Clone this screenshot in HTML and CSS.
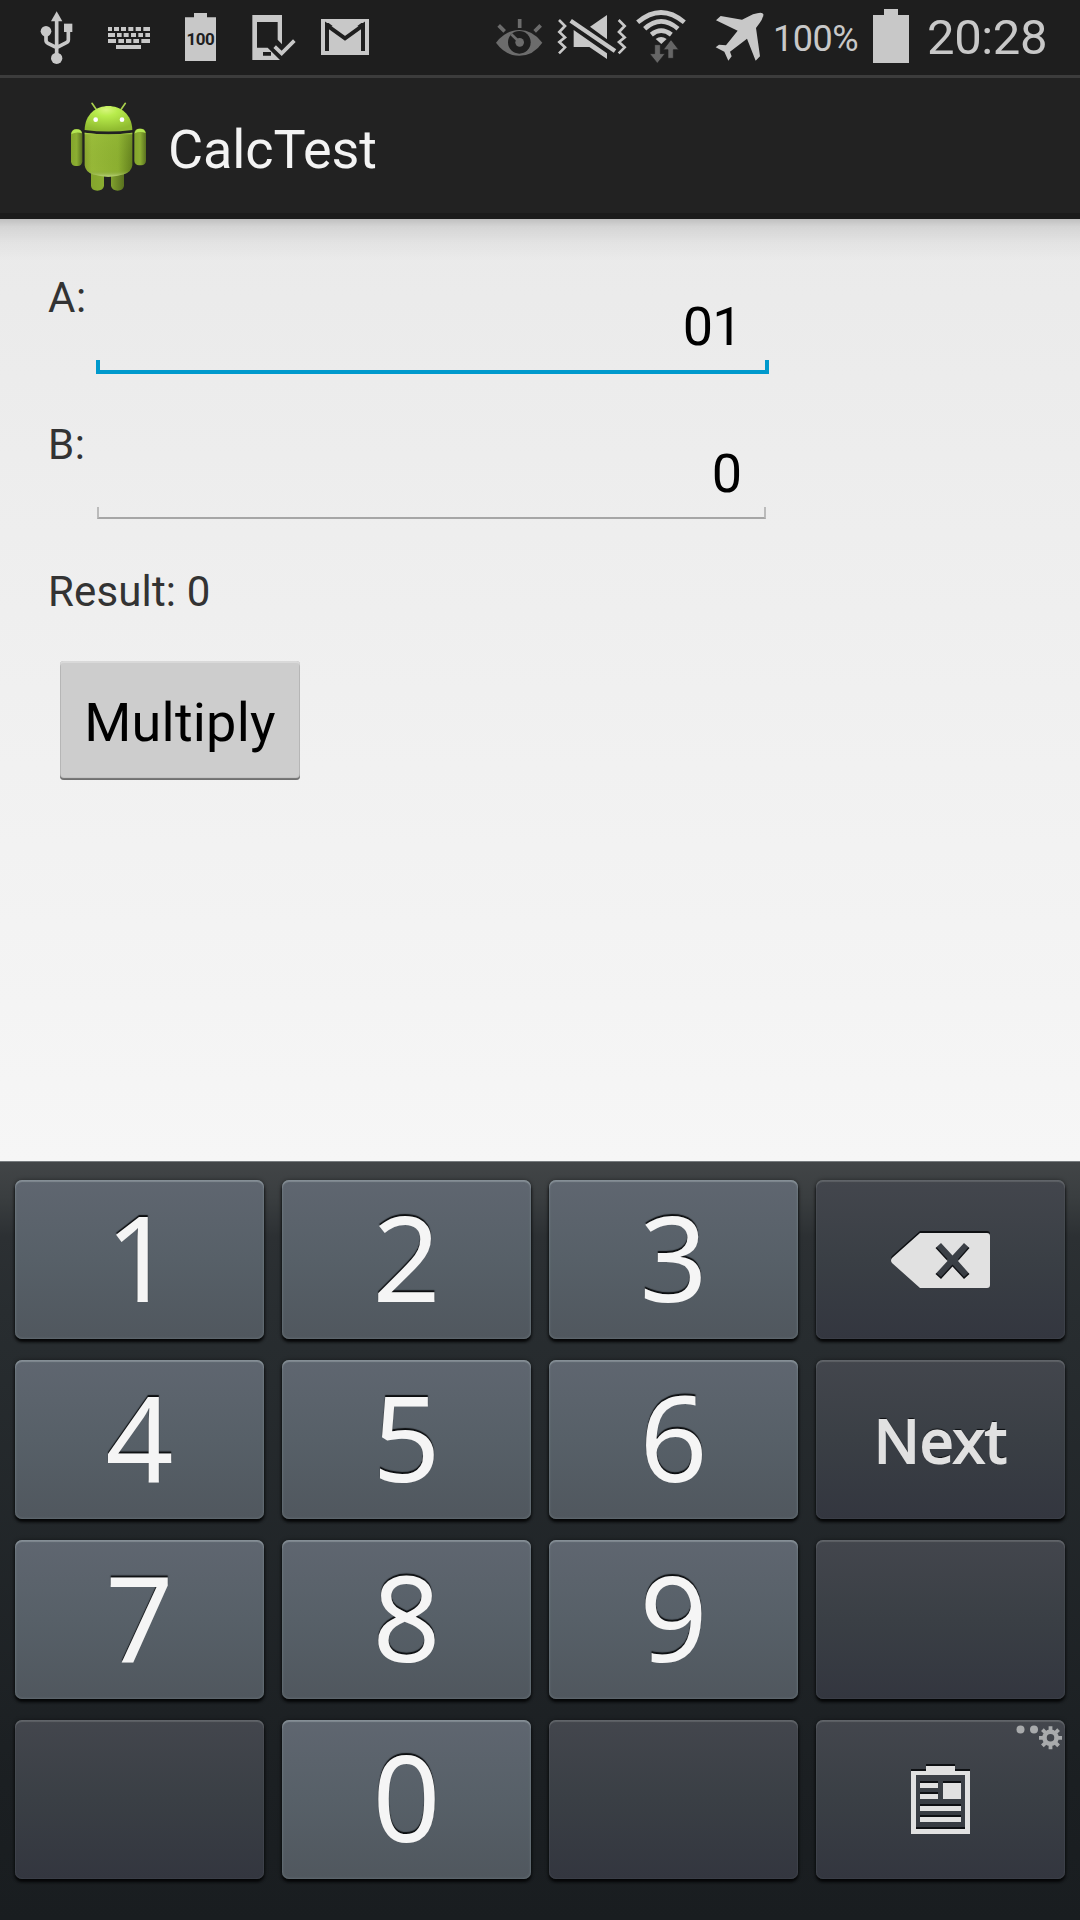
FILE: index.html
```html
<!DOCTYPE html>
<html lang="en">
<head>
<meta charset="utf-8">
<title>CalcTest</title>
<link rel="stylesheet" href="styles.css">
</head>
<body>
<header class="status">
  <svg class="ic usb" viewBox="120 0 99 225" width="33" height="75"><g fill="none" stroke="#c8c8c8" stroke-width="11"><path d="M170 60V165M138 95V121Q138 127 144 130L170 143M205 92V119Q205 125 199 128L170 143"/></g><g fill="#c8c8c8"><path d="M170 34L187 64H153Z"/><circle cx="138" cy="94" r="16"/><rect x="192" y="71" width="25" height="25"/><circle cx="170" cy="175" r="17"/></g></svg>
  <svg class="ic keys" viewBox="324 0 126 225" width="42" height="75"><g fill="none" stroke="#c8c8c8" stroke-width="12"><path d="M324 87H336M342 87H357M363 87H378M385 87H400M407 87H423M430 87H450M324 105H345M351 105H365M371 105H386M393 105H408M415 105H429M436 105H450M324 123H348M355 123H372M378 123H394M400 123H417M424 123H450M348 141H423"/></g></svg>
  <div class="battery-note"><svg viewBox="555 0 93 225" width="31" height="75"><path fill="#c8c8c8" d="M555 52H582V39H621V52H648V183H555Z"/></svg><span>100</span></div>
  <svg class="ic device" viewBox="756 0 132 225" width="44" height="75"><path fill="#c8c8c8" fill-rule="evenodd" d="M757 45H846V133L833 119V66H771V143H803L840 180H757ZM789 156V167H813V156Z"/><path d="M824 140L845 160L883 122" fill="none" stroke="#c8c8c8" stroke-width="11"/></svg>
  <svg class="ic gmail" viewBox="963 0 144 225" width="48" height="75"><path fill="#c8c8c8" d="M963 57H1107V165H963Z"/><path d="M981 153V76L1035 115L1089 76V153" fill="none" stroke="#1e1e1e" stroke-width="12"/><path d="M975 69H986L998 78L981 84Z M1095 69H1084L1072 78L1089 84Z" fill="#1e1e1e"/></svg>
  <svg class="ic eye" viewBox="48 0 141 225" width="47" height="75"><g fill="none" stroke="#6c6c6c" stroke-width="11"><path d="M56 76L74 94M119 57V84M182 76L164 94"/></g><path fill="#6c6c6c" d="M48 128Q78 90 118 90T187 128Q160 167 118 167T48 128Z"/><circle cx="118" cy="127" r="34" fill="#1e1e1e"/><circle cx="119" cy="127" r="13" fill="#6c6c6c"/><path d="M94 103L118 126" stroke="#6c6c6c" stroke-width="8"/></svg>
  <svg class="ic mute" viewBox="231 0 210 225" width="70" height="75"><g fill="#c8c8c8"><path d="M381 45V118L330 80Z"/><path d="M281 90L381 160V177L328 141H281Z"/></g><g fill="none" stroke="#c8c8c8"><path d="M272 62L405 153" stroke-width="13"/><path d="M237 60L255 78L238 96L255 112L238 126L255 142L237 160M416 60L434 78L417 96L434 112L417 126L434 142L416 160" stroke-width="8"/></g></svg>
  <svg class="ic wifi" viewBox="468 0 150 225" width="50" height="75"><g fill="none" stroke="#c8c8c8" stroke-width="14"><path d="M473 67Q543 8 613 67M494 86Q543 42 594 86M514 104Q543 80 574 104"/></g><path fill="#c8c8c8" d="M527 117Q543 105 560 117L544 132Z"/><path fill="#666" stroke="#1e1e1e" stroke-width="2" d="M524 134H541V161H555L532 190L509 161H524ZM564 175V149H550L573 119L596 149H580V175Z"/></svg>
  <svg class="ic plane" viewBox="705 0 147 225" width="49" height="75"><path fill="#c8c8c8" d="M708 61L722 48L786 59L819 43Q848 34 850 43Q852 54 828 84L840 169L827 182L801 116L750 155L755 169L745 182L733 155L707 142L717 134L738 136L773 92Z"/></svg>
  <span class="percent">100%</span>
  <svg class="ic batt" viewBox="339 0 108 225" width="36" height="75"><path fill="#c8c8c8" d="M339 45H372V27H414V45H447V189H339Z"/></svg>
  <time class="clock">20:28</time>
</header>
<div class="bar">
  <svg class="droid" viewBox="90 93 231 270" width="77" height="90">
    <defs>
      <linearGradient id="body" x1="0" x2="1"><stop offset="0" stop-color="#89a42e"/><stop offset=".15" stop-color="#97b838"/><stop offset=".7" stop-color="#8caf30"/><stop offset="1" stop-color="#63801d"/></linearGradient>
      <linearGradient id="limb" x1="0" x2="1"><stop offset="0" stop-color="#84a52c"/><stop offset=".5" stop-color="#8bae32"/><stop offset="1" stop-color="#59711f"/></linearGradient>
      <radialGradient id="head" cx=".45" cy=".15" r=".8"><stop offset="0" stop-color="#d6f57c"/><stop offset=".3" stop-color="#b8ec4c"/><stop offset="1" stop-color="#90bb30"/></radialGradient>
      <linearGradient id="shine" x1="0" y1="0" x2="0" y2="1"><stop offset="0" stop-color="#bcea58"/><stop offset=".05" stop-color="#a5cf44" stop-opacity=".2"/><stop offset=".85" stop-color="#799c2d" stop-opacity="0"/><stop offset="1" stop-color="#bdd47f"/></linearGradient>
    </defs>
    <g stroke="#a9cf4c" stroke-width="5" stroke-linecap="round"><path d="M156 100L170 120M256 100L242 120"/></g>
    <path fill="url(#limb)" d="M153 310H192V348Q189 362 172 362T153 348ZM213 310H252V348Q249 362 233 362T213 348Z"/>
    <rect x="93" y="178" width="34" height="110" rx="14" fill="url(#limb)"/><rect x="283" y="176" width="35" height="110" rx="14" fill="url(#limb)"/>
    <path d="M94 192Q96 178 110 178T126 190Q110 184 94 192ZM284 190Q286 176 300 176T317 189Q300 182 284 190Z" fill="#b4e653"/>
    <path fill="url(#body)" d="M134 188Q205 197 277 188V286Q275 305 252 313Q205 327 158 313Q136 305 134 286Z"/>
    <path fill="url(#shine)" d="M134 188Q205 197 277 188V286Q275 305 252 313Q205 327 158 313Q136 305 134 286Z"/>
    <path fill="url(#head)" d="M134 180C135 84 275 84 277 180Q205 189 134 180Z"/>
    <circle cx="167" cy="149" r="7" fill="#fff"/><circle cx="246" cy="149" r="7" fill="#fff"/>
  </svg>
  <h1>CalcTest</h1>
</div>
<main class="content">
  <div class="row"><label>A:</label><div class="field active">01</div></div>
  <div class="row"><label>B:</label><div class="field">0</div></div>
  <div class="result">Result: 0</div>
  <button class="multiply">Multiply</button>
</main>
<section class="keyboard">
  <div class="key">1</div><div class="key">2</div><div class="key">3</div>
  <div class="key dark"><svg class="glyph erase" viewBox="0 0 99 55" width="99" height="55"><path fill="#e1e1e1" fill-rule="evenodd" d="M29 0H96Q99 0 99 3V52Q99 55 96 55H29L1 30Q-1 27.500 1 25ZM44.500 15L56.500 28L44.500 41L50 46L61.500 33.500L73 46L78.500 41L67 28L78.500 15L73 10L61.500 22.500L50 10Z"/></svg></div>
  <div class="key">4</div><div class="key">5</div><div class="key">6</div><div class="key dark next">Next</div>
  <div class="key">7</div><div class="key">8</div><div class="key">9</div><div class="key dark"></div>
  <div class="key dark"></div><div class="key">0</div><div class="key dark"></div>
  <div class="key dark">
    <svg class="glyph" viewBox="0 0 59 68" width="59" height="68"><path fill="#e1e1e1" fill-rule="evenodd" d="M0 5H15V0H44V5H59V68H0ZM5 9V63H54V9ZM9 17H27V22H9ZM9 28H27V33H9ZM32 17H50V33H32ZM9 40H50V45H9ZM9 51H50V56H9Z"/></svg>
    <svg class="more" viewBox="0 0 46 25" width="46" height="25"><g fill="#a8aaac"><circle cx="4.500" cy="4.500" r="4"/><circle cx="18" cy="4.500" r="4"/></g><circle cx="34.500" cy="12.800" r="6" fill="none" stroke="#a8aaac" stroke-width="4.500"/><path d="M34.500 1.300V6M34.500 19.500V24.300M23 12.800H28M41 12.800H46M26.400 4.700L29.700 8M39.300 17.600L42.600 20.900M42.600 4.700L39.300 8M29.700 17.600L26.400 20.900" stroke="#a8aaac" stroke-width="3.800"/></svg>
  </div>
</section>
</body>
</html>
```
FILE: styles.css
```css
*, *::after { box-sizing: border-box; }
body {
  margin: 0;
  width: 1080px;
  height: 1920px;
  display: flex;
  flex-direction: column;
  overflow: hidden;
  font-family: Roboto, sans-serif;
  background: #1e1e1e;
}
.status {
  display: flex;
  height: 78px;
  padding-left: 40px;
  background: #1e1e1e;
  border-bottom: 3px solid #3c3c3c;
  color: #c8c8c8;
}
.status svg { display: block; flex: none; }
.keys { margin-left: 35px; }
.battery-note { display: grid; margin-left: 35px; }
.battery-note > * { grid-area: 1 / 1; }
.battery-note span {
  color: #1e1e1e;
  font-size: 17px;
  font-weight: 700;
  line-height: 78px;
  text-align: center;
  letter-spacing: -0.5px;
  width: 31px;
}
.device { margin-left: 36px; }
.gmail { margin-left: 25px; }
.eye { margin-left: 127px; filter: blur(0.6px); }
.mute { margin-left: 14px; }
.wifi { margin-left: 9px; }
.plane { margin-left: 29px; }
.percent { margin-left: 9px; width: 100px; font-size: 36px; line-height: 78px; letter-spacing: -0.5px; }
.clock { margin-left: 18px; font-size: 49px; line-height: 75px; letter-spacing: -0.4px; }

.bar {
  display: flex;
  height: 141px;
  padding: 23px 0 0 70px;
  background: #222;
  border-bottom: 6px solid #1b1b1b;
}
.bar h1 {
  margin: 12px 0 0 21px;
  color: #f3f3f3;
  font-size: 54px;
  font-weight: 400;
  line-height: 74px;
  letter-spacing: -0.1px;
}

.content {
  height: 942px;
  padding: 50px 48px 0;
  background:
    linear-gradient(rgba(0,0,0,.18), rgba(0,0,0,.09) 8px, rgba(0,0,0,.03) 24px, transparent 42px),
    linear-gradient(#eaeaea, #f6f6f6);
  color: #333;
  font-size: 42px;
}
.row { display: flex; height: 147px; }
.row label { width: 49px; line-height: 58px; letter-spacing: 0.5px; }
.field {
  position: relative;
  width: 669px;
  height: 105px;
  padding: 26px 24px 0 0;
  color: #000;
  font-size: 54px;
  line-height: 64px;
  text-align: right;
}
.field::after {
  content: "";
  position: absolute;
  left: 0;
  right: 0;
  bottom: 2px;
  height: 12px;
  border: solid #bbb;
  border-width: 0 2px 2px;
  border-bottom-color: #a6a6a6;
}
.field.active { width: 673px; margin-left: -1px; padding-right: 27px; letter-spacing: -0.7px; }
.field.active::after { bottom: 0; height: 14px; border: solid #0099cc; border-width: 0 4px 4px; }
.result { height: 98px; line-height: 58px; letter-spacing: 0.15px; }
.multiply {
  display: block;
  width: 240px;
  height: 119px;
  margin: 0 0 0 12px;
  padding: 4px 0 0;
  border: 0;
  border-radius: 4px;
  background: #cdcdcd;
  box-shadow: inset 0 2px 0 #d9d9d9, inset 0 -2px 1px #707070, inset 1px 0 0 #bebebe, inset -1px 0 0 #bebebe;
  font: 54px/115px Roboto, sans-serif;
  letter-spacing: 0.2px;
  color: #000;
}

.keyboard {
  flex: 1;
  display: grid;
  grid-template-columns: repeat(4, 249px);
  grid-auto-rows: 159px;
  gap: 21px 18px;
  padding: 18px 15px 0;
  border-top: 1px solid #777b7e;
  background: linear-gradient(#424547, #3a3e40 35px, #2c3033 75px, #282d30 150px, #1b1f22 620px, #191d20);
}
.key {
  position: relative;
  display: flex;
  align-items: center;
  justify-content: center;
  padding-bottom: 6px;
  border-radius: 7px;
  background: linear-gradient(#5f6670, #576068 50%, #50575e);
  box-shadow: inset 0 2px 1px rgba(180,190,195,.38), inset 0 0 3px rgba(150,165,170,.5), 0 3px 3px #050607, 0 0 4px rgba(0,0,0,.4);
  color: #f5f5f5;
  font-family: "Noto Sans", sans-serif;
  font-size: 119px;
  line-height: 151px;
  text-shadow: 0 -2px 1px #0c0e10;
}
.key.dark {
  padding-bottom: 0;
  background: linear-gradient(#43464d, #3a3f45 50%, #33363f);
  box-shadow: inset 0 2px 1px rgba(160,165,165,.28), inset 0 0 2px rgba(120,130,135,.4), 0 3px 3px #050607, 0 0 4px rgba(0,0,0,.4);
}
.key.next { padding-top: 2px; color: #e1e1e1; font-size: 60px; letter-spacing: 0.4px; -webkit-text-stroke: 2px #e1e1e1; }
.glyph { filter: drop-shadow(0 -2px 0 #0e1013); }
.erase { margin-top: 2px; }
.more { position: absolute; top: 5px; right: 3px; }
```
